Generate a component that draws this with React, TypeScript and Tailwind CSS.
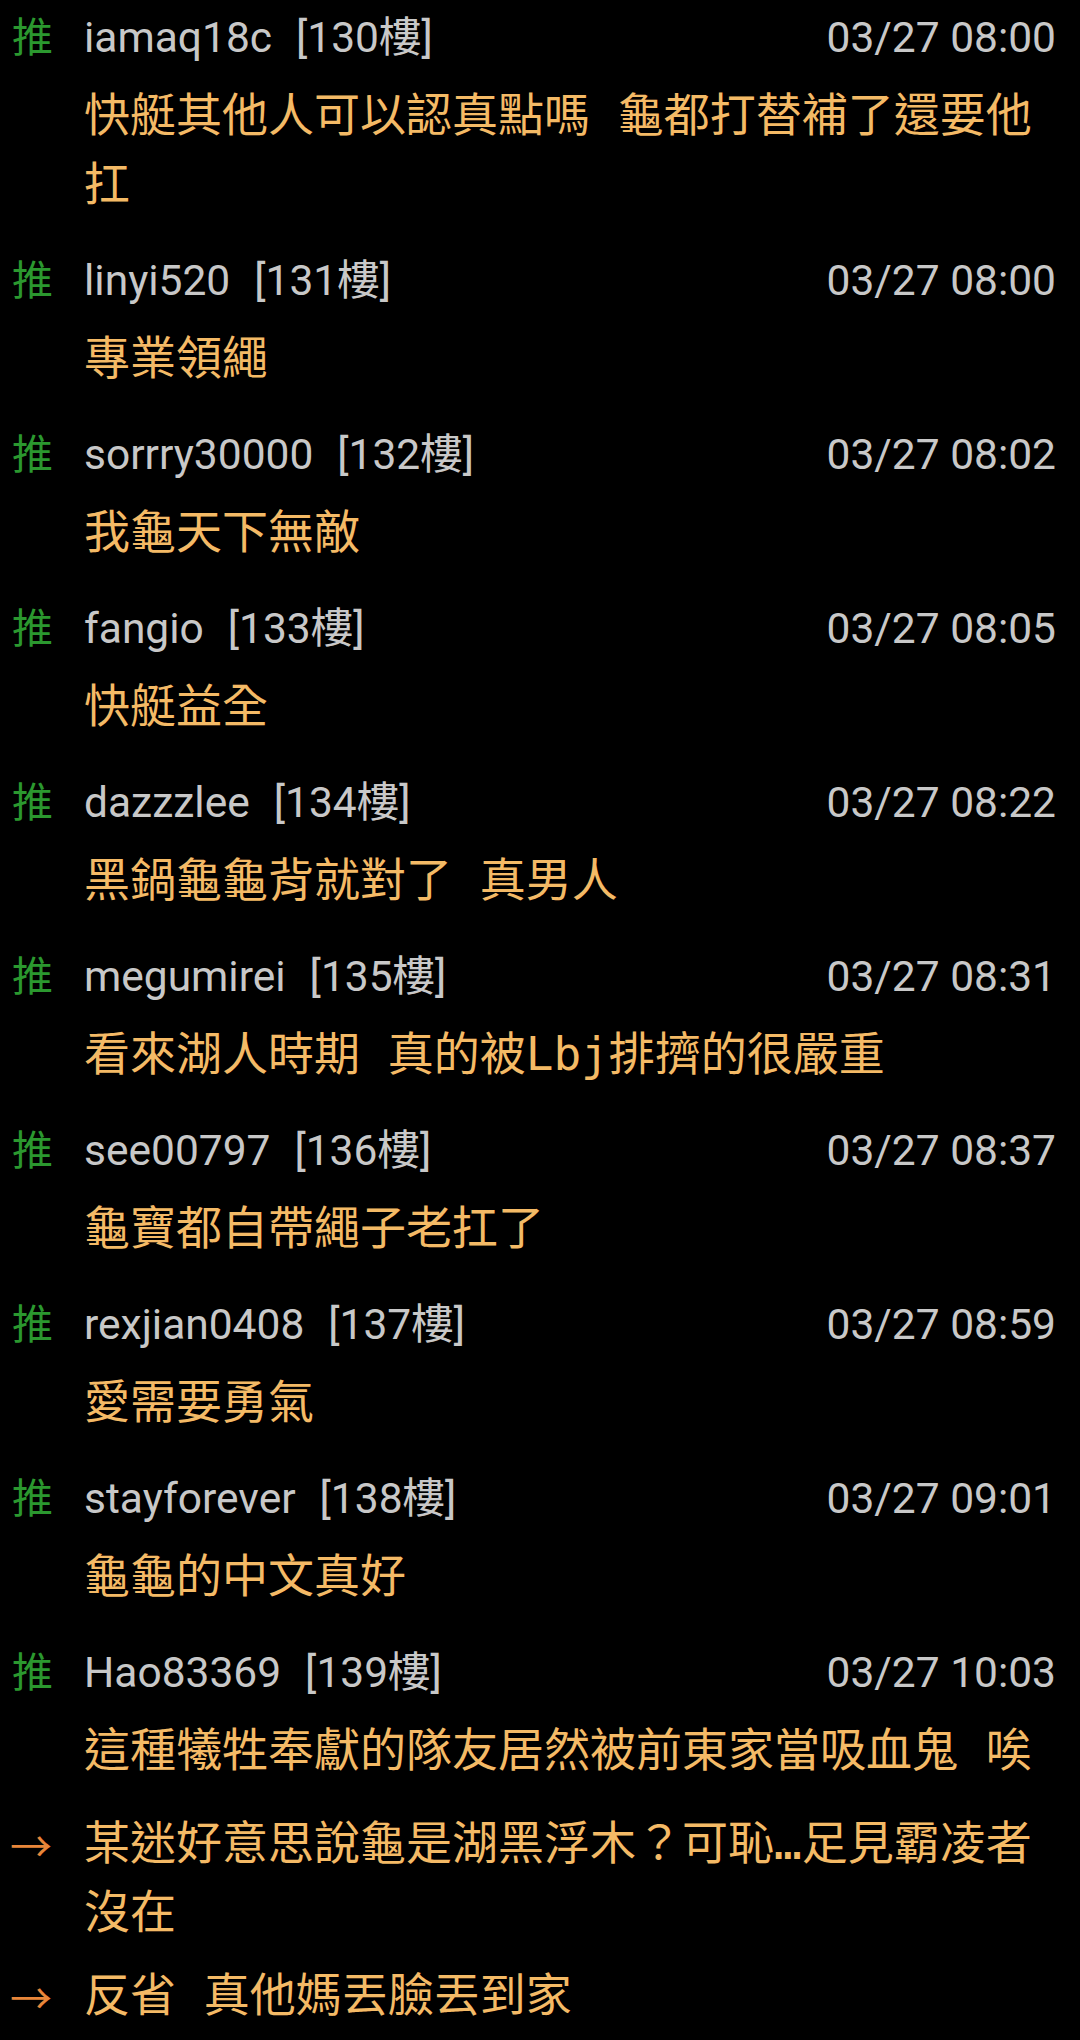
import React from "react";

type Push = {
  user: string;
  floor: number;
  time: string;
  text: string;
};

const pushes: Push[] = [
  { user: "iamaq18c", floor: 130, time: "03/27 08:00", text: "快艇其他人可以認真點嗎 龜都打替補了還要他扛" },
  { user: "linyi520", floor: 131, time: "03/27 08:00", text: "專業領繩" },
  { user: "sorrry30000", floor: 132, time: "03/27 08:02", text: "我龜天下無敵" },
  { user: "fangio", floor: 133, time: "03/27 08:05", text: "快艇益全" },
  { user: "dazzzlee", floor: 134, time: "03/27 08:22", text: "黑鍋龜龜背就對了 真男人" },
  { user: "megumirei", floor: 135, time: "03/27 08:31", text: "看來湖人時期 真的被Lbj排擠的很嚴重" },
  { user: "see00797", floor: 136, time: "03/27 08:37", text: "龜寶都自帶繩子老扛了" },
  { user: "rexjian0408", floor: 137, time: "03/27 08:59", text: "愛需要勇氣" },
  { user: "stayforever", floor: 138, time: "03/27 09:01", text: "龜龜的中文真好" },
  { user: "Hao83369", floor: 139, time: "03/27 10:03", text: "這種犧牲奉獻的隊友居然被前東家當吸血鬼 唉" },
];

const arrows = ["某迷好意思說龜是湖黑浮木？可恥…足見霸凌者沒在", "反省 真他媽丟臉丟到家"];

const headFont = "font-['Roboto','Noto_Sans_CJK_TC',sans-serif]";
const bodyFont = "font-['DejaVu_Sans_Mono','Noto_Sans_CJK_TC',monospace]";

const PushItem = ({ p }: { p: Push }) => (
  <div className="pt-[12px] pb-[24px]">
    <div className={`flex h-[52px] items-center pr-[24px] text-[42.5px] leading-[52px] text-[#c8c8c8] ${headFont}`}>
      <span className="w-[84px] shrink-0 pl-[12px] text-[41px] text-[#2b982f]">推</span>
      <span>{p.user}</span>
      <span className="ml-[24px]">[{p.floor}樓]</span>
      <span className="ml-auto">{p.time}</span>
    </div>
    <div className={`mt-[17px] pl-[84px] pr-[24px] text-[46px] leading-[69px] text-[#f4ba66] whitespace-pre-wrap ${bodyFont}`}>
      {p.text}
    </div>
  </div>
);

const ArrowItem = ({ text }: { text: string }) => (
  <div className="flex pb-[14px] pr-[24px]">
    <span className="w-[84px] shrink-0 pl-[10px] font-['Noto_Sans_CJK_TC',sans-serif] text-[42px] leading-[69px] text-[#e8863a]">
      →
    </span>
    <div className={`min-w-0 flex-1 text-[46px] leading-[69px] text-[#f4ba66] whitespace-pre-wrap ${bodyFont}`}>
      {text}
    </div>
  </div>
);

const App = () => {
  return (
    <div className="min-h-[2040px] w-[1080px] overflow-hidden bg-black">
      {pushes.map((p) => (
        <PushItem key={p.floor} p={p} />
      ))}
      {arrows.map((t) => (
        <ArrowItem key={t} text={t} />
      ))}
    </div>
  );
};

export default App;
